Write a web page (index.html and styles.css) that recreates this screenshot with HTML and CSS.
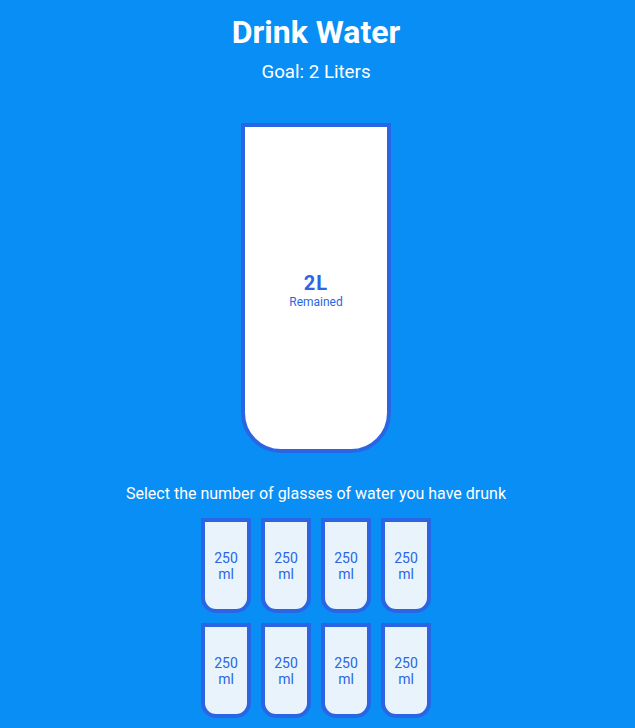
FILE: index.html
```html
<!DOCTYPE html>
<html lang="en">
<head>
    <meta charset="UTF-8">
    <meta name="viewport" content="width=device-width, initial-scale=1.0">
    <title>Drink Water</title>
    <link rel="stylesheet" href="styles.css">
</head>
<body>
    <h1>Drink Water</h1>
    <h3>Goal: 2 Liters</h3>

    <div class="cup">
        <div class="remained">
            <span>2L</span>
            <small>Remained</small>
        </div>
    </div>

    <p class="text">Select the number of glasses of water you have drunk</p>

    <div class="cups">
        <div class="cup cup-small">250 ml</div>
        <div class="cup cup-small">250 ml</div>
        <div class="cup cup-small">250 ml</div>
        <div class="cup cup-small">250 ml</div>
        <div class="cup cup-small">250 ml</div>
        <div class="cup cup-small">250 ml</div>
        <div class="cup cup-small">250 ml</div>
        <div class="cup cup-small">250 ml</div>
    </div>
</body>
</html>
```

FILE: styles.css
```css
* {
    box-sizing: border-box;
}
body {
    background-color: #088ef4;
    color: #fff;
    font-family: Roboto, "Liberation Sans", sans-serif;
    display: flex;
    flex-direction: column;
    align-items: center;
    margin: 0;
    padding: 0 3px 50px 0;
}
h1 {
    font-size: 32px;
    margin: 13px 0 0;
}
h3 {
    font-size: 18.72px;
    font-weight: 400;
    margin: 10px 0;
}
.cup {
    background-color: #fff;
    border: 4px solid #2a66e4;
    color: #2a66e4;
    border-radius: 0 0 40px 40px;
    height: 330px;
    width: 150px;
    margin: 30px 0 31px;
    display: flex;
    flex-direction: column;
    overflow: hidden;
}
.cup.cup-small {
    height: 95px;
    width: 50px;
    border-radius: 0 0 15px 15px;
    background-color: #e8f3fc;
    font-size: 14px;
    align-items: center;
    justify-content: center;
    text-align: center;
    margin: 5px;
    cursor: pointer;
}
.remained {
    display: flex;
    flex-direction: column;
    align-items: center;
    justify-content: center;
    text-align: center;
    flex: 1;
    padding-top: 3px;
}
.remained span {
    font-size: 20px;
    font-weight: bold;
    letter-spacing: 1px;
}
.remained small {
    font-size: 12px;
}
.text {
    font-size: 16px;
    text-align: center;
    margin: 0 0 10px;
}
.cups {
    display: flex;
    flex-wrap: wrap;
    align-items: center;
    justify-content: center;
    width: 280px;
}
```
